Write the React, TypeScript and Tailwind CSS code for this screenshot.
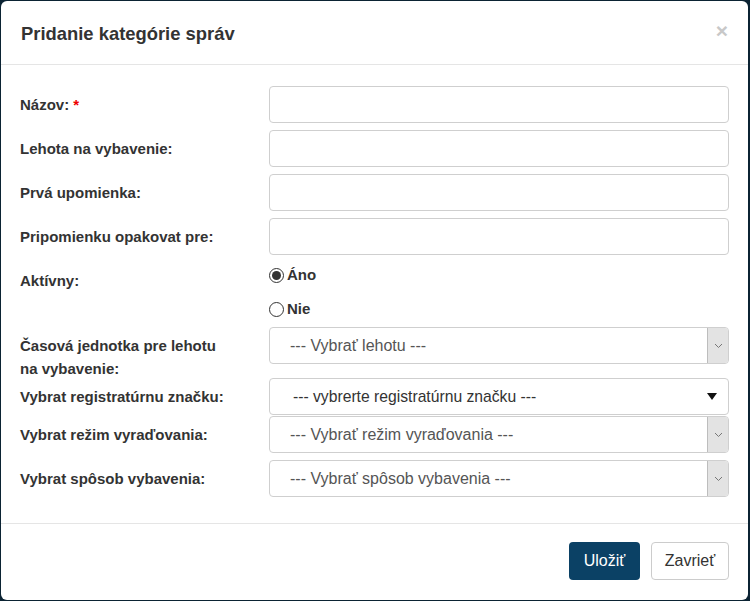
const FONT = { fontFamily: '"Liberation Sans", Arial, sans-serif' };

function Chevron() {
  return (
    <svg width="9" height="6" viewBox="0 0 9 6" fill="none">
      <path d="M1 1l3.5 3.5L8 1" stroke="#777" strokeWidth="1" />
    </svg>
  );
}

function AddonSelect({ placeholder }: { placeholder: string }) {
  return (
    <div className="flex h-[37px] w-full items-stretch rounded-[4px] border border-[#cfcfcf] bg-white">
      <div className="flex flex-1 items-center pl-[20px] text-[16px] text-[#555]">{placeholder}</div>
      <div className="flex w-[21px] items-center justify-center rounded-r-[3px] border-l border-[#bdbdbd] bg-[#e3e3e3]">
        <Chevron />
      </div>
    </div>
  );
}

function TextInput() {
  return <input className="h-[37px] w-full rounded-[4px] border border-[#cfcfcf] bg-white px-3 text-[15px] outline-none" />;
}

function Row({ label, children, className = "" }: { label: React.ReactNode; children: React.ReactNode; className?: string }) {
  return (
    <div className={"flex " + className}>
      <div className="h-[37px] w-[249px] shrink-0 overflow-visible pt-[7px] text-[15px] font-bold leading-[23px] text-[#333]">{label}</div>
      <div className="flex-1">{children}</div>
    </div>
  );
}

function Radio({ checked, label }: { checked?: boolean; label: string }) {
  return (
    <label className="flex h-[26px] items-center gap-[3px] text-[15px] font-bold text-[#333]">
      <span className="flex h-[15px] w-[15px] items-center justify-center rounded-full border border-[#333] bg-white">
        {checked ? <span className="h-[9px] w-[9px] rounded-full bg-[#333]" /> : null}
      </span>
      {label}
    </label>
  );
}

export default function App() {
  return (
    <div className="h-[601px] w-[750px] overflow-hidden bg-[#0b2333] pl-[1px] pr-[2px] pt-[1px]" style={FONT}>
      <div className="flex h-[599px] flex-col rounded-[6px] bg-white">
        <div className="flex h-[64px] items-center justify-between border-b border-[#e5e5e5] pl-[20px] pr-[20px]">
          <h4 className="pt-[2px] text-[18.4px] font-bold text-[#333]">Pridanie kategórie správ</h4>
          <span className="pb-[4px] text-[21px] font-bold leading-none text-[#c8c8c8]">×</span>
        </div>

        <div className="flex-1 pl-[19px] pr-[19px] pt-[21px]">
          <Row label={<>Názov: <span className="text-[#e00]">*</span></>}>
            <TextInput />
          </Row>
          <Row label="Lehota na vybavenie:" className="mt-[7px]">
            <TextInput />
          </Row>
          <Row label="Prvá upomienka:" className="mt-[7px]">
            <TextInput />
          </Row>
          <Row label="Pripomienku opakovat pre:" className="mt-[7px]">
            <TextInput />
          </Row>
          <div className="mt-[7px] flex">
            <div className="w-[249px] shrink-0 pt-[7px] text-[15px] font-bold leading-[23px] text-[#333]">Aktívny:</div>
            <div className="flex flex-col gap-[8px]">
              <Radio checked label="Áno" />
              <Radio label="Nie" />
            </div>
          </div>
          <Row
            label={
              <>
                Časová jednotka pre lehotu
                <br />
                na vybavenie:
              </>
            }
            className="mt-[5px]"
          >
            <AddonSelect placeholder="--- Vybrať lehotu ---" />
          </Row>
          <Row label="Vybrat registratúrnu značku:" className="mt-[14px]">
            <div className="flex h-[37px] w-full items-center justify-between rounded-[4px] border border-[#cfcfcf] bg-white pl-[23px] pr-[11px] text-[15.7px] text-[#333]">
              <span>--- vybrerte registratúrnu značku ---</span>
              <svg width="10" height="7" viewBox="0 0 10 7">
                <path d="M0 0h10L5 7z" fill="#111" />
              </svg>
            </div>
          </Row>
          <Row label="Vybrat režim vyraďovania:" className="mt-[1px]">
            <AddonSelect placeholder="--- Vybrať režim vyraďovania ---" />
          </Row>
          <Row label="Vybrat spôsob vybavenia:" className="mt-[7px]">
            <AddonSelect placeholder="--- Vybrať spôsob vybavenia ---" />
          </Row>
        </div>

        <div className="flex h-[77px] items-start justify-end gap-[11px] border-t border-[#e5e5e5] pr-[19px] pt-[18px]">
          <button className="h-[38px] w-[71px] rounded-[4px] bg-[#0b4165] text-[16px] text-white">Uložiť</button>
          <button className="h-[38px] w-[78px] rounded-[4px] border border-[#cccccc] bg-white text-[16px] text-[#333]">Zavrieť</button>
        </div>
      </div>
    </div>
  );
}
